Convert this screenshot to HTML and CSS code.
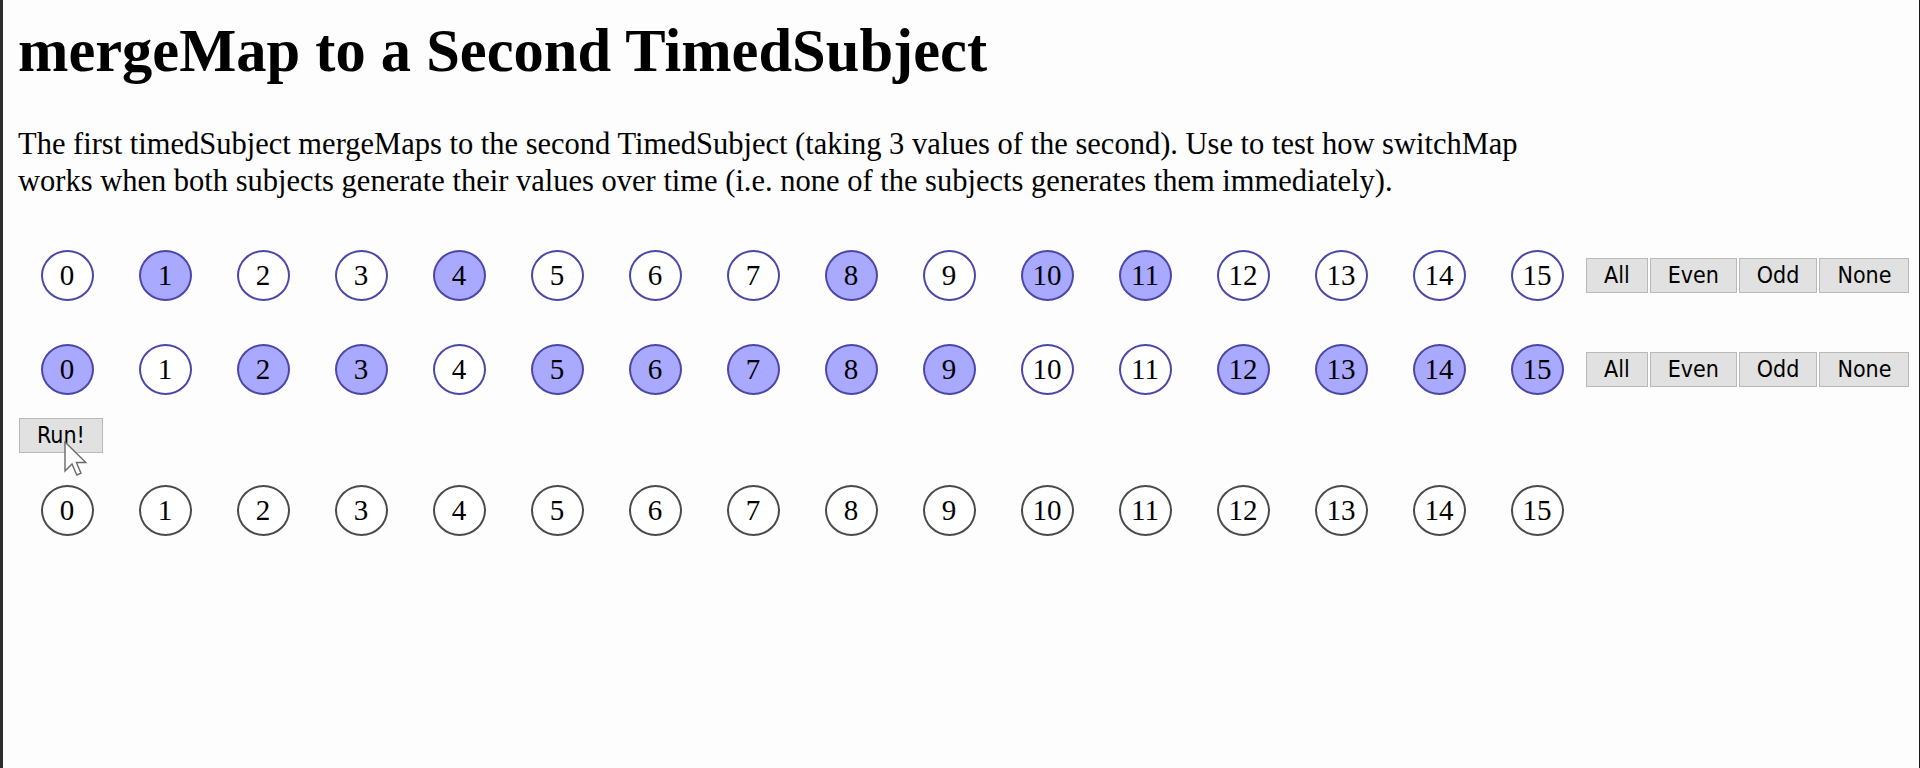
FILE: index.html
```html
<!DOCTYPE html>
<html>
<head>
<meta charset="utf-8">
<title>mergeMap to a Second TimedSubject</title>
<link rel="stylesheet" href="styles.css">
</head>
<body>
<div class="frame">
  <h1 class="title">mergeMap to a Second TimedSubject</h1>
  <p class="intro">The first timedSubject mergeMaps to the second TimedSubject (taking 3 values of the second). Use to test how switchMap works when both subjects generate their values over time (i.e. none of the subjects generates them immediately).</p>

  <div class="row row-first">
    <div class="cells">
      <div class="cell"><span class="dot">0</span></div>
      <div class="cell"><span class="dot on">1</span></div>
      <div class="cell"><span class="dot">2</span></div>
      <div class="cell"><span class="dot">3</span></div>
      <div class="cell"><span class="dot on">4</span></div>
      <div class="cell"><span class="dot">5</span></div>
      <div class="cell"><span class="dot">6</span></div>
      <div class="cell"><span class="dot">7</span></div>
      <div class="cell"><span class="dot on">8</span></div>
      <div class="cell"><span class="dot">9</span></div>
      <div class="cell"><span class="dot on">10</span></div>
      <div class="cell"><span class="dot on">11</span></div>
      <div class="cell"><span class="dot">12</span></div>
      <div class="cell"><span class="dot">13</span></div>
      <div class="cell"><span class="dot">14</span></div>
      <div class="cell"><span class="dot">15</span></div>
    </div>
    <div class="btns">
      <button class="btn">All</button><button class="btn">Even</button><button class="btn">Odd</button><button class="btn">None</button>
    </div>
  </div>

  <div class="row row-second">
    <div class="cells">
      <div class="cell"><span class="dot on">0</span></div>
      <div class="cell"><span class="dot">1</span></div>
      <div class="cell"><span class="dot on">2</span></div>
      <div class="cell"><span class="dot on">3</span></div>
      <div class="cell"><span class="dot">4</span></div>
      <div class="cell"><span class="dot on">5</span></div>
      <div class="cell"><span class="dot on">6</span></div>
      <div class="cell"><span class="dot on">7</span></div>
      <div class="cell"><span class="dot on">8</span></div>
      <div class="cell"><span class="dot on">9</span></div>
      <div class="cell"><span class="dot">10</span></div>
      <div class="cell"><span class="dot">11</span></div>
      <div class="cell"><span class="dot on">12</span></div>
      <div class="cell"><span class="dot on">13</span></div>
      <div class="cell"><span class="dot on">14</span></div>
      <div class="cell"><span class="dot on">15</span></div>
    </div>
    <div class="btns">
      <button class="btn">All</button><button class="btn">Even</button><button class="btn">Odd</button><button class="btn">None</button>
    </div>
  </div>

  <div class="run-line">
    <button class="btn run">Run!</button>
    <svg class="cursor" width="26" height="38" viewBox="0 0 26 38" aria-hidden="true">
      <path d="M1 1 L1 30 L8 23 L12.8 34 L17 32.2 L12.4 21.5 L21.8 21.5 Z" fill="#ffffff" stroke="#6a6a6a" stroke-width="1.4" stroke-linejoin="miter"/>
    </svg>
  </div>

  <div class="row row-result">
    <div class="cells">
      <div class="cell"><span class="dot out">0</span></div>
      <div class="cell"><span class="dot out">1</span></div>
      <div class="cell"><span class="dot out">2</span></div>
      <div class="cell"><span class="dot out">3</span></div>
      <div class="cell"><span class="dot out">4</span></div>
      <div class="cell"><span class="dot out">5</span></div>
      <div class="cell"><span class="dot out">6</span></div>
      <div class="cell"><span class="dot out">7</span></div>
      <div class="cell"><span class="dot out">8</span></div>
      <div class="cell"><span class="dot out">9</span></div>
      <div class="cell"><span class="dot out">10</span></div>
      <div class="cell"><span class="dot out">11</span></div>
      <div class="cell"><span class="dot out">12</span></div>
      <div class="cell"><span class="dot out">13</span></div>
      <div class="cell"><span class="dot out">14</span></div>
      <div class="cell"><span class="dot out">15</span></div>
    </div>
  </div>
</div>
</body>
</html>
```

FILE: styles.css
```css
html, body {
  margin: 0;
  padding: 0;
  background: #fdfdfd;
}

.frame {
  box-sizing: border-box;
  height: 768px;
  border-left: 3px solid #2e2e2e;
  border-right: 1px solid #1a1a1a;
  padding: 0 15px;
  font-family: "Liberation Serif", "Times New Roman", serif;
  color: #000;
  overflow: hidden;
}

.title {
  margin: 20px 0 0;
  font-size: 60.5px;
  font-weight: bold;
  line-height: 62px;
}

.intro {
  margin: 44px 0 0;
  width: 1520px;
  font-size: 30.5px;
  line-height: 37px;
}

.row {
  display: flex;
  align-items: center;
  height: 52px;
}

.row-first {
  margin-top: 49px;
}

.row-second {
  margin-top: 42px;
}

.row-result {
  margin-top: 31px;
}

.cells {
  display: flex;
}

.cell {
  width: 98px;
  display: flex;
  justify-content: center;
}

.dot {
  box-sizing: border-box;
  width: 53px;
  height: 51px;
  border: 2px solid #4a47a8;
  border-radius: 50%;
  background: #ffffff;
  display: flex;
  align-items: center;
  justify-content: center;
  font-size: 29px;
  line-height: 1;
  padding-top: 1px;
}

.dot.on {
  background: #a9a9ff;
}

.dot.out {
  border-color: #4a4a4a;
}

.btns {
  display: flex;
  gap: 2px;
}

.btn {
  box-sizing: border-box;
  height: 35px;
  margin: 0;
  padding: 0 17px;
  border: 1px solid #b9b9b9;
  background: #e1e1e1;
  color: #000;
  font-family: "DejaVu Sans Condensed", "DejaVu Sans", sans-serif;
  font-stretch: condensed;
  font-size: 23px;
  line-height: 33px;
}

.run-line {
  position: relative;
  margin-top: 23px;
  height: 35px;
}

.run {
  margin-left: 1px;
}

.cursor {
  position: absolute;
  left: 46px;
  top: 23px;
}
```
